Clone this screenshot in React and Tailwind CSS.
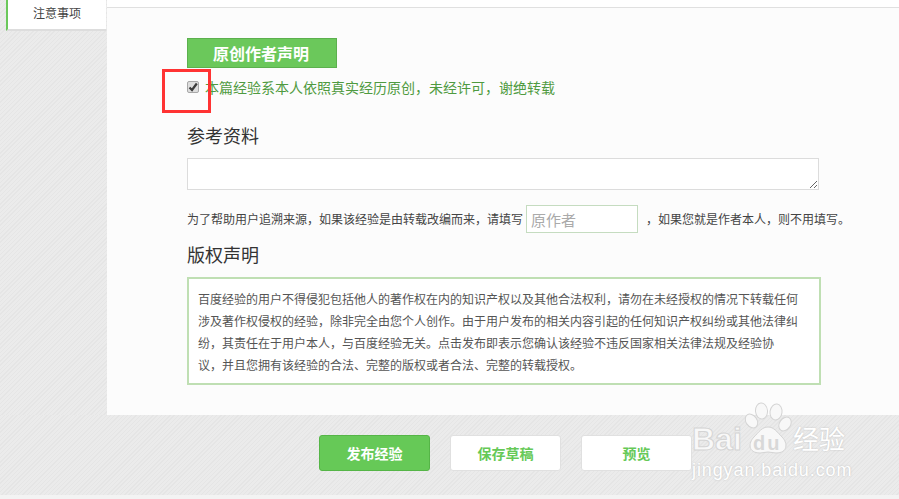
import React from 'react';

const cjk = { fontFamily: '"Noto Sans CJK SC", "Liberation Sans", sans-serif' };
const latin = { fontFamily: '"Liberation Sans", sans-serif' };
const texture = 'bg-[repeating-linear-gradient(135deg,#e5e5e5_0,#e5e5e5_1px,#ebebeb_1px,#ebebeb_3px)]';

const Watermark = () => (
    <div className="absolute left-[690px] top-[400px] w-[209px] h-[90px] pointer-events-none">
        <svg className="absolute left-[50px] top-0" width="60" height="60" viewBox="0 0 60 60" fill="#f8f8f8" stroke="#d4d4d4" strokeWidth="1">
            <ellipse cx="21.5" cy="11" rx="6" ry="8" transform="rotate(-5 21.5 11)" />
            <ellipse cx="36" cy="12" rx="6" ry="8" transform="rotate(8 36 12)" />
            <ellipse cx="11.5" cy="21" rx="5.5" ry="7.5" transform="rotate(-35 11.5 21)" />
            <ellipse cx="45" cy="24" rx="5.5" ry="7.5" transform="rotate(35 45 24)" />
            <path d="M28 27c6 0 9 5 14 10 6 6 6 16-6 16-3 0-5-1-8-1s-5 1-8 1c-12 0-12-10-6-16 5-5 8-10 14-10z" />
        </svg>
        <div className="absolute left-[2px] top-[21px] text-[32px] leading-[36px] font-bold text-[#f8f8f8] [-webkit-text-stroke:1px_#d4d4d4]" style={latin}>Bai</div>
        <div className="absolute left-[63px] top-[33px] text-[20px] leading-[20px] font-bold tracking-[2px] text-[#d8d8d8]" style={latin}>du</div>
        <div className="absolute left-[103px] top-[23px] text-[26px] leading-[30px] text-white [text-shadow:0_0_2px_#bdbdbd]" style={cjk}>经验</div>
        <div className="absolute left-[2px] top-[60px] text-[18px] leading-[20px] tracking-[0.9px] text-white [text-shadow:0_0_2px_#bdbdbd]" style={latin}>jingyan.baidu.com</div>
    </div>
);

const App = () => {
    return (
        <div className="relative w-[899px] h-[499px] overflow-hidden bg-[#f3f3f3]" style={cjk}>
            <div className="flex h-[415px]">
                <div className={`w-[107px] pl-[6px] ${texture}`}>
                    <div className="w-[100px] h-[31px] pb-[4px] bg-white border-l-2 border-[#6bc85b] border-b-2 border-b-[#dddddd] flex items-center justify-center text-[12px] text-[#444444]">
                        注意事项
                    </div>
                </div>

                <div className="flex-1 bg-[#fcfcfc]">
                    <div className="h-[8px] bg-white border-b border-[#e0e0e0]" />
                    <div className="pl-[80px] pt-[30px]">
                        <div className="w-[150px] h-[30px] pr-[2px] bg-[#6bc85b] border border-[#5cb04e] flex items-center justify-center text-white text-[16px] font-bold">
                            原创作者声明
                        </div>

                        <label className="mt-[12px] h-[14px] flex items-center gap-[6px] text-[14px] text-[#4f9a40]">
                            <span className="relative w-[12px] h-[12px] flex">
                                <input type="checkbox" defaultChecked className="appearance-none w-[12px] h-[12px] m-0 rounded-[2px] bg-[#dedede] border border-[#a8a8a8]" />
                                <svg className="absolute left-[1px] top-[1px]" width="10" height="10" viewBox="0 0 10 10" fill="none" stroke="#3c3c3c" strokeWidth="2.2">
                                    <path d="M1.5 5.5 4 8 8.8 1.5" />
                                </svg>
                            </span>
                            本篇经验系本人依照真实经历原创，未经许可，谢绝转载
                        </label>

                        <h2 className="mt-[29px] text-[18px] leading-[24px] text-[#333333] font-normal">参考资料</h2>

                        <textarea className="block mt-[11px] w-[632px] h-[32px] bg-white border border-[#dcdcdc] outline-none" />

                        <div className="mt-[15px] flex items-center h-[28px] text-[12px] text-[#444444] whitespace-nowrap">
                            为了帮助用户追溯来源，如果该经验是由转载改编而来，请填写
                            <input placeholder="原作者" className="ml-[3px] w-[112px] h-[28px] px-[4px] text-[15px] bg-white border border-[#c5dcc0] outline-none placeholder:text-[#aaaaaa]" />
                            <span className="ml-[8px]">，如果您就是作者本人，则不用填写。</span>
                        </div>

                        <h2 className="mt-[9px] text-[18px] leading-[24px] text-[#333333] font-normal">版权声明</h2>

                        <div className="mt-[11px] w-[634px] h-[108px] bg-white border-2 border-[#bfdfb3] pl-[9px] pr-[13px] py-[9px] text-[12px] leading-[22px] text-[#555555]">
                            百度经验的用户不得侵犯包括他人的著作权在内的知识产权以及其他合法权利，请勿在未经授权的情况下转载任何涉及著作权侵权的经验，除非完全由您个人创作。由于用户发布的相关内容引起的任何知识产权纠纷或其他法律纠纷，其责任在于用户本人，与百度经验无关。点击发布即表示您确认该经验不违反国家相关法律法规及经验协<br />议，并且您拥有该经验的合法、完整的版权或者合法、完整的转载授权。
                        </div>
                    </div>
                </div>
            </div>

            <div className={`h-[80px] pb-[4px] flex items-center gap-[20px] pl-[319px] ${texture}`}>
                <button className="w-[111px] h-[36px] rounded-[3px] bg-[#66c957] border border-[#55b547] text-white text-[14px] font-bold">发布经验</button>
                <button className="w-[111px] h-[36px] rounded-[3px] bg-white border border-[#e0e0e0] text-[#66c957] text-[14px] font-bold">保存草稿</button>
                <button className="w-[111px] h-[36px] rounded-[3px] bg-white border border-[#e0e0e0] text-[#66c957] text-[14px] font-bold">预览</button>
            </div>

            <div className="absolute left-[162px] top-[69px] w-[49px] h-[44px] border-[3px] border-[#ff3333]" />
            <Watermark />
        </div>
    );
};

export default App;
